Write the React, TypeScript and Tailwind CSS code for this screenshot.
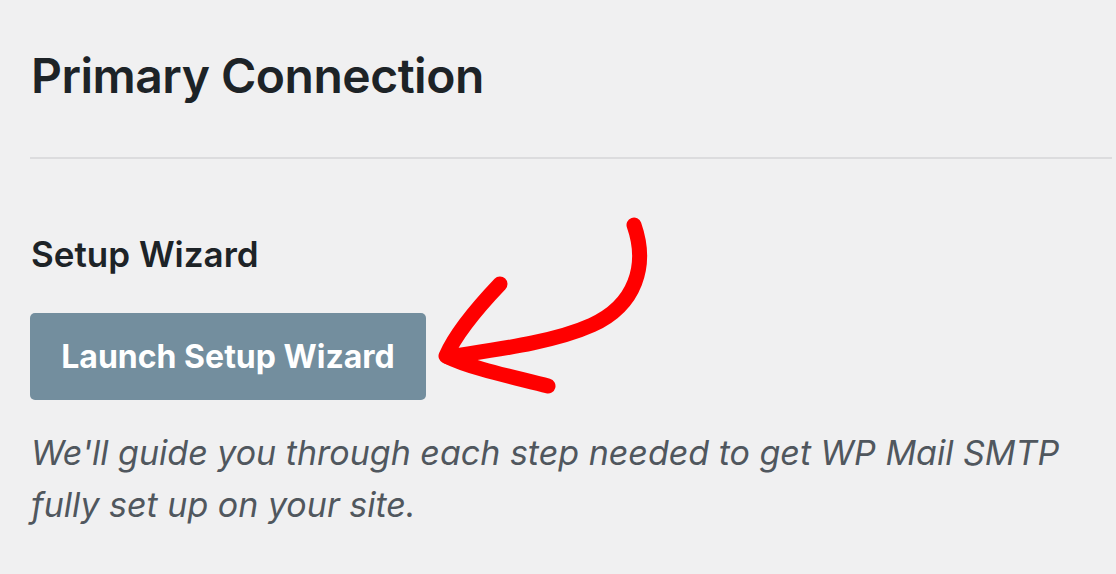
import React from 'react';

const font = { fontFamily: 'Inter, "Noto Sans", "Liberation Sans", sans-serif' };

function HandArrow() {
  return (
    <svg
      className="pointer-events-none absolute left-0 top-0"
      width="1116"
      height="574"
      viewBox="0 0 1116 574"
      fill="none"
    >
      <path
        d="M634 225 C648 265, 636 305, 592 325 C552 343, 492 350, 448 357"
        stroke="#ff0000"
        strokeWidth="15"
        strokeLinecap="round"
        strokeLinejoin="round"
      />
      <path
        d="M500 284 C480 305, 456 333, 446 356 C472 369, 518 378, 548 386"
        stroke="#ff0000"
        strokeWidth="15"
        strokeLinecap="round"
        strokeLinejoin="round"
      />
    </svg>
  );
}

export default function App() {
  return (
    <div className="relative h-[574px] w-[1116px] overflow-hidden bg-[#f0f0f1]" style={font}>
      <div className="pl-[30px] pr-[4px] pt-[44px]">
        {/* Header */}
        <h1 className="pl-[1px] text-[48px] font-semibold leading-[64px] tracking-[-0.5px] text-[#1d2327]">
          Primary Connection
        </h1>
        <div className="mt-[49px] h-[2px] bg-[#dcdcde]" />

        {/* Setup wizard */}
        <h2 className="mt-[75px] pl-[1px] text-[35px] font-semibold leading-[40px] text-[#1d2327]">
          Setup Wizard
        </h2>
        <button
          type="button"
          className="mt-[39px] flex h-[87px] w-[396px] items-center justify-center rounded-[5px] bg-[#738e9e] text-[32px] font-bold text-white"
        >
          Launch Setup Wizard
        </button>
        <p className="mt-[27px] pl-[1px] text-[34px] italic leading-[52px] text-[#50575e]">
          We'll guide you through each step needed to get WP Mail SMTP
          <br />
          fully set up on your site.
        </p>
      </div>
      <HandArrow />
    </div>
  );
}
